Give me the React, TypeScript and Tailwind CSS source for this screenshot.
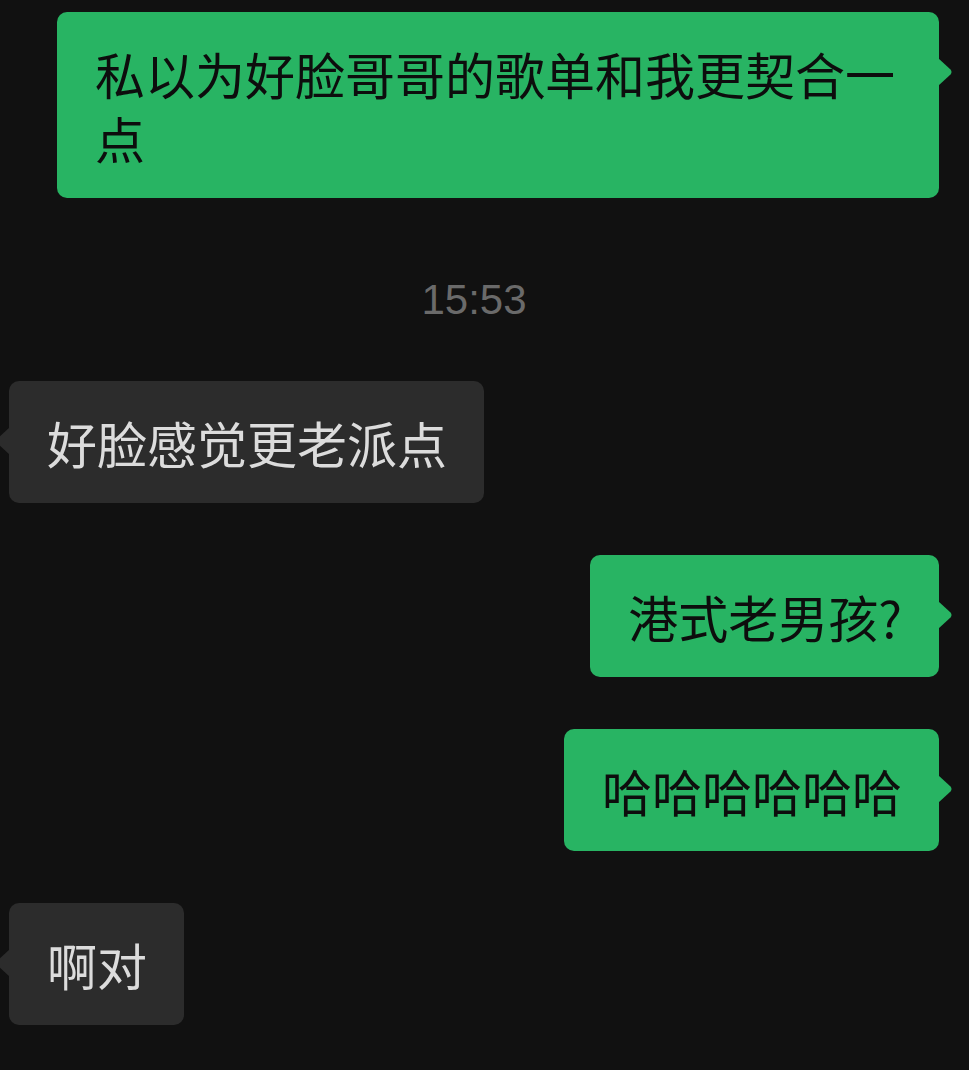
import React from 'react';

type Side = 'left' | 'right';

interface BubbleProps {
  side: Side;
  text: string;
  className?: string;
}

const Tail: React.FC<{ side: Side; color: string }> = ({ side, color }) => (
  <svg
    width="15"
    height="28"
    viewBox="0 0 15 28"
    className={
      side === 'right'
        ? 'absolute top-[46px] right-[-14px]'
        : 'absolute top-[46px] left-[-14px] -scale-x-100'
    }
  >
    <path d="M0 0 L12.5 11.5 Q14.5 14 12.5 16.5 L0 28 Z" fill={color} />
  </svg>
);

const Bubble: React.FC<BubbleProps> = ({ side, text, className }) => {
  const mine = side === 'right';
  return (
    <div className={`flex ${mine ? 'justify-end pr-[30px]' : 'justify-start pl-[9px]'} ${className ?? ''}`}>
      <div
        className={`relative max-w-[882px] rounded-[10px] pl-[38px] pr-[37px] py-[29px] text-[50px] leading-[64px] ${
          mine ? 'bg-[#28b463] text-[#0d0d0d]' : 'bg-[#2c2c2c] text-[#dcdcdc]'
        }`}
      >
        <Tail side={side} color={mine ? '#28b463' : '#2c2c2c'} />
        {text}
      </div>
    </div>
  );
};

export default function App() {
  return (
    <div
      className="w-[969px] h-[1070px] overflow-hidden bg-[#111111] pt-[12px] flex flex-col"
      style={{ fontFamily: '"Noto Sans CJK SC", "Noto Sans", sans-serif' }}
    >
      <Bubble side="right" text="私以为好脸哥哥的歌单和我更契合一点" />

      <div className="mt-[82px] h-[40px] leading-[40px] text-center text-[42px] text-[#6a6a6a] font-['Liberation_Sans',sans-serif] pr-[21px]">
        15:53
      </div>

      <Bubble side="left" text="好脸感觉更老派点" className="mt-[61px]" />
      <Bubble side="right" text="港式老男孩?" className="mt-[52px]" />
      <Bubble side="right" text="哈哈哈哈哈哈" className="mt-[52px]" />
      <Bubble side="left" text="啊对" className="mt-[52px]" />
    </div>
  );
}
